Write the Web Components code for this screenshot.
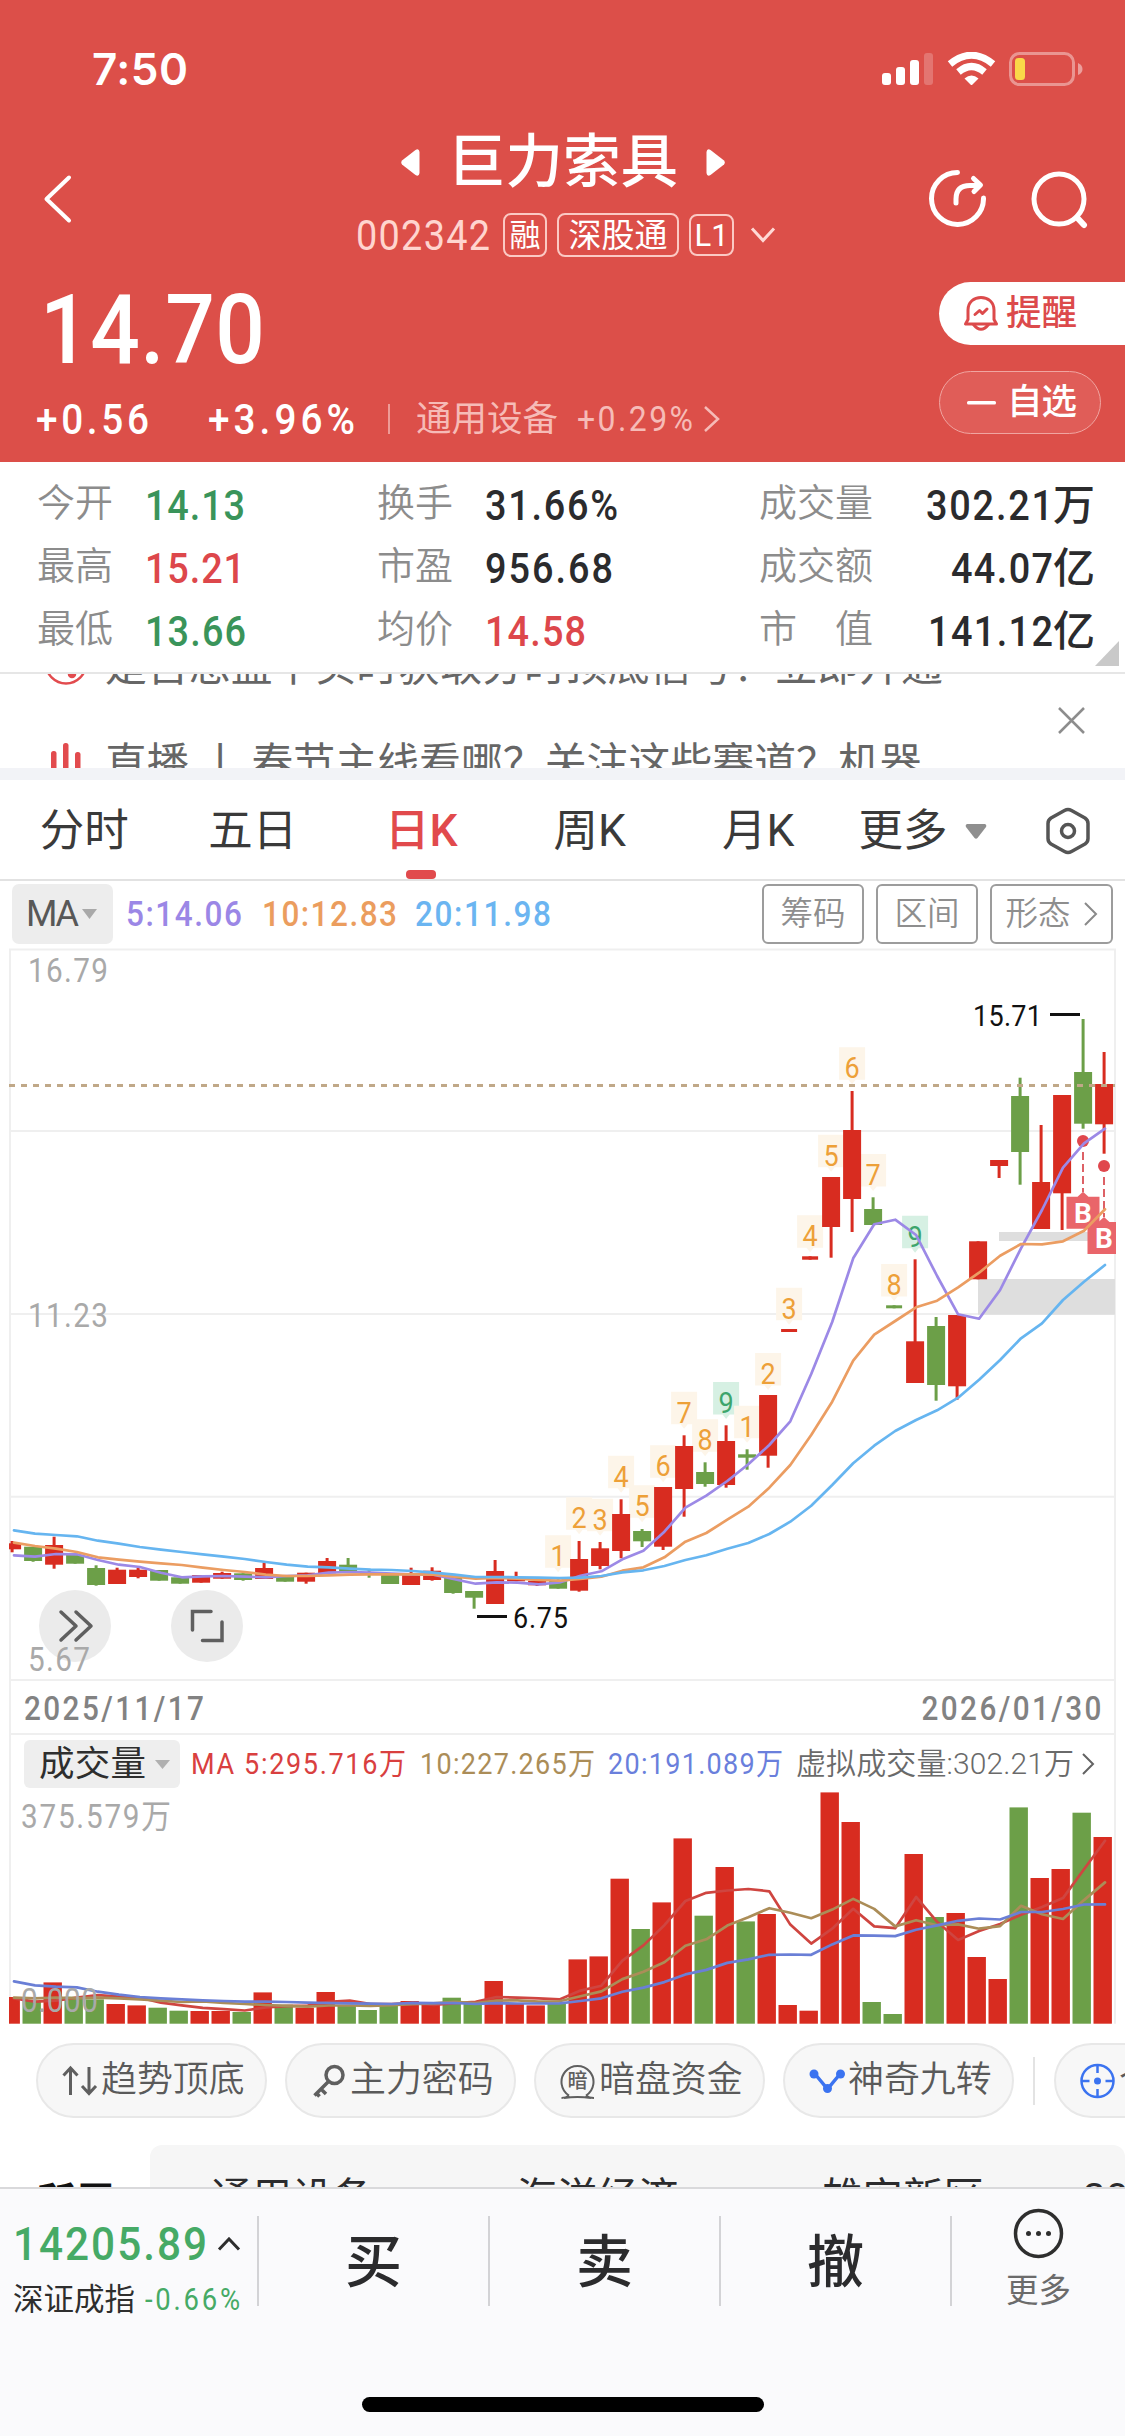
<!DOCTYPE html>
<html lang="zh-CN">
<head>
<meta charset="utf-8">
<title>巨力索具 002342</title>
<style>
    :root {
        --red: #e14a4c;
        --green: #3a945a;
        --ink: #2b2b2d;
        --line: #efefef;
        --header: #dc4f49;
    }

    body {
        margin: 0;
        width: 1125px;
        height: 2436px;
        overflow: hidden;
        display: flex;
        flex-direction: column;
        background: #fff;
        color: var(--ink);
        font-family: Roboto, "Noto Sans CJK SC", sans-serif;
        line-height: 1.2;
    }
</style>
</head>
<body>

    <stock-header>
        <span slot="name">巨力索具</span>
        <span slot="code">002342</span>
        <span slot="price">14.70</span>
    </stock-header>

    <quote-stats></quote-stats>
    <news-ticker></news-ticker>
    <period-tabs></period-tabs>
    <ma-legend></ma-legend>
    <kline-chart></kline-chart>
    <volume-chart></volume-chart>
    <tool-strip></tool-strip>
    <sector-strip></sector-strip>
    <trade-bar></trade-bar>

<script>
// shared base: clones a template into an open shadow root
const make = (html) => {
    const template = document.createElement('template');
    template.innerHTML = html;
    return class extends HTMLElement {
        constructor() {
            super();
            this.attachShadow({ mode: 'open' });
            this.shadowRoot.appendChild(template.content.cloneNode(true));
        }
    };
};

// ==============================================
// header: status bar, name, price
const StatusBar = make(`
    <style>
        :host {
            display: flex;
            justify-content: space-between;
            align-items: flex-start;
            box-sizing: border-box;
            height: 126px;
            padding: 52px 42px 0 92px;
        }
        .time {
            font: 600 44px/34px Inter, sans-serif;
        }
    </style>
    <span class="time"><fit-text w="96">7:50</fit-text></span>
    <svg width="201" height="35" viewBox="0 0 201 35" fill="#fff">
        <rect x="0" y="21" width="9" height="12" rx="3"/>
        <rect x="14" y="15" width="9" height="18" rx="3"/>
        <rect x="28" y="8" width="9" height="25" rx="3"/>
        <rect x="42" y="1" width="9" height="32" rx="3" opacity=".22"/>
        <g fill="none" stroke="#fff" stroke-width="7">
            <path d="M68 12Q89.500 -5.500 111 12"/>
            <path d="M76.500 20Q89.500 9 102.500 20"/>
        </g>
        <path d="M82.500 26.500Q89.500 20.500 96.500 26.500L90.500 32.500Q89.500 33.500 88.500 32.500Z"/>
        <rect x="128.500" y="1.500" width="63" height="31" rx="9" fill="none" stroke="#fff" stroke-width="3" opacity=".4"/>
        <rect x="133" y="6" width="10" height="22" rx="3.500" fill="#fad849"/>
        <path d="M196 11q4.500 2 4.500 6t-4.500 6z" opacity=".45"/>
    </svg>
`);

const StockHeader = make(`
    <style>
        :host {
            display: block;
            height: 462px;
            background: var(--header);
            color: #fff;
        }
        .nav {
            display: grid;
            grid-template-columns: 358px 571px 1fr;
            align-items: center;
            height: 146px;
        }
        .back { margin-left: 42px; }
        .title {
            display: flex;
            align-items: center;
            gap: 28px;
            height: 72px;
            padding-left: 43px;
            font-size: 57.500px;
            line-height: 73px;
            font-weight: 500;
        }
        .title svg { margin-top: 1px; }
        .sub {
            display: flex;
            align-items: center;
            height: 74px;
            font-size: 42px;
            line-height: 60px;
            color: #ffd5cf;
        }
        .tag {
            box-sizing: border-box;
            height: 44px;
            margin-right: 10px;
            border: 2px solid #fbc9c4;
            border-radius: 8px;
            color: #fff;
            font-size: 31px;
            line-height: 42px;
            text-align: center;
            white-space: nowrap;
        }
        .actions {
            display: flex;
            gap: 45px;
        }
        .quote {
            display: grid;
            grid-template-columns: 939px 1fr;
            height: 190px;
        }
        .price {
            height: 115px;
            padding-left: 40px;
            font-size: 97px;
            line-height: 117px;
            font-weight: 500;
        }
        .change {
            display: flex;
            align-items: center;
            height: 63px;
            padding-left: 36px;
            font-size: 43px;
            line-height: 64px;
            font-weight: 500;
        }
        .divider {
            width: 2px;
            height: 30px;
            margin: 0 26px 0 33px;
            background: #ee9b97;
        }
        .sector {
            display: flex;
            align-items: center;
            color: #f6bbb7;
            font-size: 35.500px;
            font-weight: 400;
        }
        .side {
            display: flex;
            flex-direction: column;
            gap: 26px;
            padding-top: 10px;
            font-size: 35.500px;
            line-height: 65px;
            font-weight: 500;
        }
        .remind, .watch {
            display: flex;
            align-items: center;
            box-sizing: border-box;
            height: 63px;
        }
        .remind {
            padding-left: 24px;
            gap: 7px;
            border-radius: 32px 0 0 32px;
            background: #fff;
            color: #dc4a4b;
        }
        .watch {
            width: 162px;
            padding-left: 27px;
            gap: 11px;
            border: 1.500px solid #f0a5a1;
            border-radius: 32px;
            background: #e05d58;
        }
    </style>

    <status-bar></status-bar>

    <div class="nav">
        <svg class="back" width="32" height="50" viewBox="0 0 32 50" fill="none" stroke="#fff" stroke-width="4" stroke-linecap="round" stroke-linejoin="round">
            <path d="M27 3.500 4.500 25 27 46.500"/>
        </svg>
        <div>
            <div class="title">
                <svg width="19" height="27" viewBox="0 0 19 27" fill="#fff"><path d="M1 11.500 14.500 1Q18 -1 18.500 3V24Q18 28 14.500 26L1 15.500Q-.5 13.500 1 11.500Z"/></svg>
                <fit-text w="230"><slot name="name"></slot></fit-text>
                <svg width="19" height="27" viewBox="0 0 19 27" fill="#fff"><path d="M18 11.500 4.500 1Q1 -1 .5 3V24Q1 28 4.500 26L18 15.500Q19.500 13.500 18 11.500Z"/></svg>
            </div>
            <div class="sub">
                <fit-text narrow w="134" style="margin: 1px 13px 0 -2px"><slot name="code"></slot></fit-text>
                <span class="tag" style="width: 44px">融</span>
                <span class="tag" style="width: 122px; font-size: 33px">深股通</span>
                <span class="tag" style="width: 45px; height: 42px; line-height: 40px">L1</span>
                <svg style="margin-left: 6px" width="26" height="18" viewBox="0 0 26 18" fill="none" stroke="#ffd9d5" stroke-width="3"><path d="M2 2.500 13 14.500 24 2.500"/></svg>
            </div>
        </div>
        <div class="actions">
            <svg width="57" height="58" viewBox="0 0 57 58" fill="none" stroke="#fff" stroke-width="5" stroke-linecap="round" stroke-linejoin="round">
                <path d="M28.500 3.500A26 26 0 1 0 54.500 29"/>
                <path d="M27 34V30Q27 16.500 41 16.500H50M44.500 9.500 51.500 16 45 22.500"/>
            </svg>
            <svg width="58" height="60" viewBox="0 0 58 60" fill="none" stroke="#fff" stroke-width="5" stroke-linecap="round">
                <circle cx="28" cy="30" r="25"/><path d="M46 48.500 53 56" stroke-width="6"/>
            </svg>
        </div>
    </div>

    <div class="quote">
        <div>
            <div class="price"><fit-text narrow w="225"><slot name="price"></slot></fit-text></div>
            <div class="change">
                <fit-text narrow w="113">+0.56</fit-text>
                <fit-text narrow w="147" style="margin-left: 59px">+3.96%</fit-text>
                <span class="divider"></span>
                <span class="sector">
                    <fit-text w="142">通用设备</fit-text>
                    <fit-text narrow w="116" style="margin: 0 10px 0 19px">+0.29%</fit-text>
                    <svg width="18" height="28" viewBox="0 0 18 28" fill="none" stroke="#f6bbb7" stroke-width="2.500"><path d="M2 2 15 14 2 26"/></svg>
                </span>
            </div>
        </div>
        <div class="side">
            <div class="remind">
                <svg width="36" height="37" viewBox="0 0 36 37" fill="none" stroke="#dc4a4b" stroke-width="3" stroke-linejoin="round" stroke-linecap="round">
                    <path d="M2.500 29H33.500L31 24.500V15C31 7 25 2.500 18 2.500S5 7 5 15V24.500Z"/>
                    <path d="M10.500 29.500Q18 39 25.500 29.500"/>
                    <path d="M12 19.500 16.500 15.500 19.500 18.500 24 14"/>
                </svg>
                <fit-text w="71">提醒</fit-text>
            </div>
            <div class="watch">
                <svg width="29" height="4" viewBox="0 0 29 4"><rect width="29" height="3.500" rx="1.500" fill="#fff"/></svg>
                <fit-text w="70">自选</fit-text>
            </div>
        </div>
    </div>
`);

// ==============================================
// today's numbers, 3 x 3
const QuoteCell = make(`
    <style>
        :host {
            display: flex;
            align-items: center;
            height: 63px;
            font-size: 42px;
            line-height: 63px;
            font-weight: 500;
            white-space: nowrap;
        }
        .label {
            width: 108px;
            color: #8c8c8c;
            font-size: 38px;
            font-weight: 350;
        }
        :host([wide]) { justify-content: space-between; }
        .value { padding-top: 3px; }
        :host([up]) .value { color: #dd474b; }
        :host([down]) .value { color: var(--green); }
    </style>
    <span class="label"><slot name="label"></slot></span>
    <span class="value"><slot></slot></span>
`);

const QuoteStats = make(`
    <style>
        :host {
            display: grid;
            grid-template-columns: 340px 382px 335px;
            grid-auto-rows: 63px;
            align-content: start;
            box-sizing: border-box;
            height: 212px;
            padding: 10px 0 0 37px;
            border-bottom: 2px solid #e6e6e6;
            position: relative;
        }
        .corner {
            position: absolute;
            right: 6px;
            bottom: 6px;
        }
    </style>
    <quote-cell down><span slot="label">今开</span><fit-text narrow w="100">14.13</fit-text></quote-cell>
    <quote-cell><span slot="label">换手</span><fit-text narrow w="133">31.66%</fit-text></quote-cell>
    <quote-cell wide><span slot="label">成交量</span><fit-text w="168"><fit-text narrow w="127">302.21</fit-text>万</fit-text></quote-cell>
    <quote-cell up><span slot="label">最高</span><fit-text narrow w="100">15.21</fit-text></quote-cell>
    <quote-cell><span slot="label">市盈</span><fit-text narrow w="128">956.68</fit-text></quote-cell>
    <quote-cell wide><span slot="label">成交额</span><fit-text w="143"><fit-text narrow w="102">44.07</fit-text>亿</fit-text></quote-cell>
    <quote-cell down><span slot="label">最低</span><fit-text narrow w="101">13.66</fit-text></quote-cell>
    <quote-cell up><span slot="label">均价</span><fit-text narrow w="101">14.58</fit-text></quote-cell>
    <quote-cell wide><span slot="label">市　值</span><fit-text w="166"><fit-text narrow w="125">141.12</fit-text>亿</fit-text></quote-cell>
    <svg class="corner" width="24" height="25" viewBox="0 0 24 25"><path d="M24 0V25H0Z" fill="#c9c9c9"/></svg>
`);

// ==============================================
// two headlines caught half way through the scroll
const NewsTicker = make(`
    <style>
        :host {
            display: flex;
            box-sizing: border-box;
            height: 106px;
            overflow: hidden;
            border-bottom: 12px solid #f2f3f7;
            color: #666;
            font-size: 41.900px;
            line-height: 60px;
        }
        .lines { width: 1058px; margin-top: -37px; }
        .item {
            display: flex;
            align-items: center;
            height: 60px;
            margin-bottom: 37px;
            padding-left: 44px;
            white-space: nowrap;
        }
        .item svg { margin-right: 17px; flex: none; }
        .close { margin-top: 33px; }
    </style>
    <div class="lines">
        <div class="item">
            <svg width="44" height="44" viewBox="0 0 44 44" fill="none" stroke="#e24b4e" stroke-width="2.500">
                <circle cx="22" cy="18.500" r="20"/>
                <circle cx="28" cy="29" r="3" fill="#e24b4e"/>
            </svg>
            <span>是否想盘中实时获取分时顶底信号？立即开通</span>
        </div>
        <div class="item">
            <svg width="44" height="44" viewBox="0 0 44 44" fill="#e24b4e">
                <rect x="7" y="9" width="5.500" height="30" rx="2.500"/>
                <rect x="19" y="1" width="5.500" height="40" rx="2.500"/>
                <rect x="31" y="10" width="5.500" height="30" rx="2.500"/>
            </svg>
            <span>直播 丨 春节主线看哪？关注这些赛道？机器</span>
        </div>
    </div>
    <svg class="close" width="28" height="28" viewBox="0 0 28 28" stroke="#8d8d8d" stroke-width="2.500"><path d="M1 1 26 26M26 1 1 26"/></svg>
`);

// ==============================================
const PeriodTab = make(`
    <style>
        :host {
            display: flex;
            flex-direction: column;
            align-items: center;
            justify-content: space-between;
            height: 99px;
            color: #3a3a3a;
        }
        .bar { width: 30px; height: 9px; border-radius: 4px; }
        :host([active]) { color: var(--red); font-weight: 500; }
        :host([active]) .bar { background: var(--red); }
    </style>
    <slot></slot>
    <span class="bar"></span>
`);

const PeriodTabs = make(`
    <style>
        :host {
            display: grid;
            grid-template-columns: repeat(5, 168.500px) 1fr 79px;
            box-sizing: border-box;
            height: 101px;
            border-bottom: 2px solid #e2e2e2;
            font-size: 44.500px;
            line-height: 102px;
        }
        period-tab > span { height: 90px; }
        .more {
            display: flex;
            align-items: center;
            gap: 17px;
            padding-left: 16px;
            color: #3a3a3a;
        }
        .gear { align-self: center; }
    </style>
    <period-tab><span>分时</span></period-tab>
    <period-tab><span>五日</span></period-tab>
    <period-tab active><span>日K</span></period-tab>
    <period-tab><span>周K</span></period-tab>
    <period-tab><span>月K</span></period-tab>
    <span class="more">更多 <svg width="22" height="15" viewBox="0 0 22 15"><path d="M2 0H20Q22 1 21 3L12.500 14Q11 15.500 9.500 14L1 3Q0 1 2 0Z" fill="#8f8f8f"/></svg></span>
    <svg class="gear" width="44" height="48" viewBox="0 0 44 48" fill="none" stroke="#555" stroke-width="3.500" stroke-linejoin="round">
        <path d="M18.500 3.500Q22 1.500 25.500 3.500L39 11Q42 13 42 16.500V31.500Q42 35 39 37L25.500 44.500Q22 46.500 18.500 44.500L5 37Q2 35 2 31.500V16.500Q2 13 5 11Z"/>
        <circle cx="22" cy="24" r="6.500"/>
    </svg>
`);

// ==============================================
const MaLegend = make(`
    <style>
        :host {
            display: flex;
            align-items: flex-start;
            box-sizing: border-box;
            height: 67px;
            padding: 3px 12px 0;
            font-size: 35px;
            line-height: 61px;
        }
        .pick {
            display: flex;
            align-items: center;
            gap: 3px;
            box-sizing: border-box;
            width: 101px;
            height: 60px;
            margin-right: 13px;
            padding-left: 14px;
            border-radius: 7px;
            background: #ededed;
            color: #585858;
            font-size: 36px;
        }
        fit-text[narrow] { font-weight: 500; }
        .ma5 { color: #9b87e6; }
        .ma10 { color: #eb9d5e; }
        .ma20 { color: #6bb5f1; }
        .buttons { display: flex; gap: 12px; margin-left: auto; }
        .button {
            display: flex;
            align-items: center;
            justify-content: center;
            gap: 12px;
            box-sizing: border-box;
            width: 102px;
            height: 60px;
            border: 2px solid #9c9c9c;
            border-radius: 6px;
            color: #8e8e8e;
            font-size: 32.500px;
            font-weight: 350;
        }
    </style>
    <span class="pick"><fit-text w="53">MA</fit-text><svg width="15" height="10" viewBox="0 0 15 10"><path d="M0 0H15L7.500 10Z" fill="#a9a9a9"/></svg></span>
    <fit-text narrow class="ma5" w="116">5:14.06</fit-text>
    <fit-text narrow class="ma10" w="135" style="margin-left: 20px">10:12.83</fit-text>
    <fit-text narrow class="ma20" w="136" style="margin-left: 18px">20:11.98</fit-text>
    <span class="buttons">
        <span class="button">筹码</span>
        <span class="button">区间</span>
        <span class="button" style="width: 123px">形态<svg width="15" height="26" viewBox="0 0 15 26" fill="none" stroke="#8a8a8a" stroke-width="2"><path d="M2 2 13 13 2 24"/></svg></span>
    </span>
`);

// ==============================================
// chart data, one row per day: up(1)/down(0), high, body top, body bottom, low (px from the frame top)
const STEP = 21;
const UP = '#d82c20';
const DOWN = '#6c9f48';
const DAYS = [
    [1, 592, 594.3, 600.3, 603.3], [0, 597.7, 597.7, 612, 612.7], [1, 587.7, 596, 615.7, 619.7],
    [0, 606, 606, 614.7, 614.7], [0, 616.3, 619, 636, 636.7], [1, 618.7, 620.7, 635, 635],
    [1, 618.7, 620.7, 628, 629.3], [0, 621, 621, 631.7, 631.7], [0, 627, 628.3, 634.7, 634.7],
    [1, 626, 626, 633.7, 633.7], [1, 622.7, 624, 629.7, 629.7], [0, 624.3, 624.3, 631, 631.7],
    [1, 613.7, 619, 630, 630], [0, 627, 627.7, 632.7, 632.7], [1, 623.7, 623.7, 632.7, 634.7],
    [1, 609, 612, 624.3, 624.3], [0, 609, 615.7, 622.7, 622.7], [0, 621, 623.7, 625, 628.7],
    [0, 626, 626, 635, 635], [1, 618.7, 624.3, 636, 636], [1, 618.3, 621.7, 631, 631.7],
    [0, 628.3, 628.3, 644, 644.7], [0, 642, 642, 648.7, 659.7], [1, 611, 622, 655, 655],
    [1, 622.7, 629, 632.3, 632.3], [1, 631.7, 631.7, 636.3, 637], [0, 630.3, 631.7, 639.7, 639.7],
    [1, 592, 610, 641.7, 642.7], [1, 593, 599.3, 617, 620.3], [1, 550.3, 565, 602, 609.3],
    [0, 580, 582, 592.3, 598], [1, 538, 538, 597.7, 601], [1, 486.3, 497, 540, 567.7],
    [0, 513.3, 523, 535, 537.7], [1, 476.3, 492, 536, 538.7], [0, 500.3, 505.3, 508.7, 520.7],
    [1, 446, 446, 506.7, 518.7], [1, 380, 380, 383, 383], [1, 307.3, 307.3, 310.7, 310.7],
    [1, 228, 228, 278, 308.7], [1, 142, 181, 250, 283], [0, 248.3, 260, 276, 276],
    [0, 356.3, 356.3, 359.3, 359.3], [1, 310.3, 392.3, 434, 434], [0, 368, 377, 436, 451.7],
    [1, 366, 366, 437.3, 450.7], [1, 292.3, 292.3, 330.3, 330.3], [1, 211, 211, 217, 229],
    [0, 128.7, 147, 203, 235.7], [1, 176, 233, 280, 280], [1, 146, 146, 244.3, 281],
    [0, 70, 123, 174.7, 179.7], [1, 103, 135, 175.3, 204.7],
];

const MA5 = [606.3, 607.7, 605, 605.3, 611, 615.7, 618, 623.7, 628.3, 627.3, 627, 627.7, 628.3, 627, 626.3, 623.7, 623, 623.7, 624.7, 625.3, 625.7, 630.3, 634.7, 633.3, 633.7, 635.3, 633.5, 626.7, 622.3, 610.3, 601.7, 582.7, 558.7, 546.7, 532, 515.3, 496, 472.3, 425, 373, 309.3, 275.3, 270.7, 286, 327, 365.3, 369.7, 341, 299.3, 261, 218.7, 194.3, 179.7];
const MA10 = [593.7, 597, 599.7, 603, 608.3, 610.7, 612.7, 614.3, 616, 618.7, 621, 623, 625.7, 627, 627, 626.3, 625.7, 625.3, 625.3, 625.3, 625.7, 627.7, 629.7, 629, 629.7, 631, 631.7, 630, 627.7, 621.7, 618.3, 608.3, 592.7, 584, 570.7, 557.7, 538.7, 516, 486, 452.7, 411.7, 385.7, 372, 358.3, 351.7, 338.3, 323.7, 306.7, 295, 295.3, 292.3, 281.7, 260.3];
const MA20 = [581.3, 584.7, 586, 587.3, 591.7, 594.7, 598, 600.7, 603, 605.3, 607.7, 610, 613, 615.7, 617.7, 618.3, 619.7, 620.7, 621, 622, 623.7, 625.7, 628, 628, 628.3, 628.7, 629, 628.7, 627, 623.3, 621.3, 617, 611, 606.3, 599.7, 594, 585, 572.7, 556.7, 536, 514.3, 496.7, 482, 471, 461.3, 448.7, 430.7, 411, 389.3, 374.3, 351, 332.7, 316];

// nine-turn counters: day, digit, top
const TURNS = [
    [26, 1, 586.3], [27, 2, 548.3], [28, 3, 549.7], [29, 4, 506.7], [30, 5, 536.3], [31, 6, 496.3],
    [32, 7, 442.7], [33, 8, 470.3], [34, 9, 433], [35, 1, 456.7], [36, 2, 404], [37, 3, 338.7],
    [38, 4, 266.3], [39, 5, 185.7], [40, 6, 98.3], [41, 7, 205], [42, 8, 315], [43, 9, 266.7],
];

const VOLUME = [26.7, 23, 41.3, 27, 24.3, 19.7, 18.3, 16, 13, 12.7, 12.7, 11.7, 31.3, 19, 16, 31.7, 17.7, 13.7, 18.3, 22.7, 21.7, 26, 20.3, 42.7, 19.7, 18.3, 20.3, 64.3, 67.3, 145, 94.7, 121.3, 185.3, 108, 156.7, 102.3, 109.7, 18.7, 13, 231.3, 201.7, 21.7, 9.7, 169.7, 106.7, 110.7, 66.7, 44.7, 216.3, 145.7, 154.7, 211, 186.7];

const line = (ys, color) =>
    `<polyline points="${ys.map((y, i) => `${(14 + i * 20.98).toFixed(1)},${y.toFixed(1)}`).join(' ')}" fill="none" stroke="${color}" stroke-width="2.700" stroke-linejoin="round" stroke-linecap="round"/>`;

const candle = ([up, high, top, bottom, low], i) => {
    const x = 12.1 + i * STEP;
    const color = up ? UP : DOWN;
    const flat = low - high < 4;
    const half = flat ? 8 : 9;
    const left = Math.max(x - half, 9);
    return `<path d="M${x - 1.5} ${high}h3V${low}h-3Z" fill="${color}"/>
        <rect x="${left}" y="${top}" width="${x + half - left}" height="${bottom - top}" fill="${color}"/>`;
};

const turn = ([day, digit, top]) => {
    const x = 12.1 + day * STEP;
    const nine = digit === 9;
    return `<path d="M${x - 13} ${top}h26v32.500h-9.500l-3.500 4.500l-3.500-4.500h-9.500Z" fill="${nine ? '#d6f0e3' : '#fdf5e9'}"/>
        <text transform="translate(${x} ${top + 31}) scale(.9 1)" text-anchor="middle" font-size="30" fill="${nine ? '#3da56c' : '#eda038'}">${digit}</text>`;
};

const badge = (x, y) => `
    <path d="M${x - 16.5} ${y}h11l5.500-5l5.500 5h11v32h-33Z" fill="#e9656a"/>
    <text x="${x}" y="${y + 26}" text-anchor="middle" font-size="28" font-weight="700" fill="#fff">B</text>`;

// svg label with the same slim digits as <fit-text narrow>
const label = (cls, x, y, w, text) =>
    `<text class="${cls}" transform="translate(${x} ${y}) scale(.9 1)" textLength="${w / 0.9}">${text}</text>`;

const KlineChart = make(`
    <style>
        :host { display: block; height: 787px; }
        svg { display: block; }
        .axis { fill: #a9a9a9; font-size: 33px; }
        .date { fill: #828282; font-size: 33px; font-weight: 500; }
        .peak { fill: #111; font-size: 30px; }
    </style>
    <svg width="1125" height="787" viewBox="0 -1 1125 787">
        <defs><clipPath id="frame"><rect x="9" y="0" width="1107" height="731"/></clipPath></defs>
        <g fill="none" stroke="#efefef" stroke-width="2">
            <path d="M10 786V.5H1115V786M10 182H1115M10 365H1115M10 547.700H1115M10 731H1115M10 785H1115"/>
        </g>
        <g fill="#dedede">
            <rect x="999" y="283" width="96" height="9"/>
            <rect x="978" y="330" width="137" height="35.700"/>
        </g>
        <g clip-path="url(#frame)">
            ${TURNS.map(turn).join('')}
            ${DAYS.map(candle).join('')}
            <g stroke="#dd6166" stroke-width="2" stroke-dasharray="8 4">
                <path d="M1083 203V243M1104 228V268"/>
            </g>
            <g fill="#e0474d"><circle cx="1083" cy="192" r="6"/><circle cx="1104" cy="217" r="6"/></g>
            ${badge(1083, 247.7)}
            ${badge(1104, 273)}
            ${line(MA5, '#9c89e6')}
            ${line(MA10, '#eb9d62')}
            ${line(MA20, '#66b5f0')}
            <path d="M9 136.500H1115" stroke="#c0a888" stroke-width="3" stroke-dasharray="6 6"/>
        </g>

        ${label('peak', 973, 77, 69, '15.71')}
        ${label('peak', 513, 679, 55, '6.75')}
        <g fill="#111">
            <rect x="1050" y="64" width="30" height="3"/>
            <rect x="477" y="666" width="30" height="3"/>
        </g>

        <g fill="#ebebeb"><circle cx="75" cy="677" r="36"/><circle cx="207" cy="677" r="36"/></g>
        <g fill="none" stroke="#5f5f5f" stroke-width="3.500" stroke-linecap="round" stroke-linejoin="round">
            <path d="M61 663 76 677 61 691M76 663 91 677 76 691"/>
            <path d="M192.500 681V662.500H211M202.500 691.500H222V673" stroke-linejoin="miter"/>
        </g>

        ${label('axis', 28, 33, 80, '16.79')}
        ${label('axis', 28, 378, 80, '11.23')}
        ${label('axis', 28, 722, 62, '5.67')}
        ${label('date', 24, 771, 180, '2025/11/17')}
        ${label('date', 921.5, 771, 180, '2026/01/30')}
    </svg>
`);

// ==============================================
const BASE = 288.7;

// the first days have no history in VOLUME, so their averages are given as seed
const average = (n, seed) => VOLUME.map((v, i) => {
    if (i < seed.length) return BASE - seed[i];
    const window = VOLUME.slice(i - n + 1, i + 1);
    return BASE - window.reduce((a, b) => a + b, 0) / n;
});

const bar = (h, i) => {
    const left = Math.max(10.7 + i * STEP - 9.2, 9);
    const right = 10.7 + i * STEP + 9.2;
    return `<rect x="${left}" y="${BASE - h}" width="${right - left}" height="${h}" fill="${DAYS[i][0] ? UP : DOWN}"/>`;
};

const VolumeChart = make(`
    <style>
        :host {
            display: grid;
            height: 308px;
        }
        svg, .legend { grid-area: 1 / 1; }
        svg { display: block; }
        .legend {
            display: flex;
            align-items: center;
            align-self: start;
            height: 48px;
            padding: 5px 0 0 24px;
            font-size: 30px;
            line-height: 50px;
            white-space: nowrap;
        }
        .pick {
            display: flex;
            align-items: center;
            gap: 9px;
            box-sizing: border-box;
            width: 156px;
            height: 48px;
            margin-right: 11px;
            padding-left: 15px;
            border-radius: 6px;
            background: #eee;
            color: #2e2e2e;
            font-size: 35.500px;
            line-height: 44px;
        }
        .axis { fill: #a9a9a9; font-size: 33px; }
    </style>
    <svg width="1125" height="308" viewBox="0 0 1125 308">
        <path d="M10 0V${BASE}M1115 0V${BASE}" stroke="#efefef" stroke-width="2"/>
        ${VOLUME.map(bar).join('')}
        ${line(average(5, [25.3, 22, 23, 26]), '#cf4540')}
        ${line(average(10, [26, 25.3, 26, 25.3, 26, 25.3, 24.3, 23, 21.7]), '#ab8d58')}
        ${line(average(20, [42.3, 38.3, 37, 36.3, 32, 29, 26.7, 25.3, 24.3, 23.3, 22.7, 22, 22, 21.7, 21, 20.7, 20.3, 20, 19.7]), '#6a7fd6')}
        ${label('axis', 21, 93, 150, '375.579万')}
        ${label('axis', 21, 277, 77, '0.000')}
    </svg>
    <div class="legend">
        <span class="pick"><fit-text w="107">成交量</fit-text><svg width="15" height="9" viewBox="0 0 15 9"><path d="M0 0H15L7.500 9Z" fill="#b0b0b0"/></svg></span>
        <fit-text narrow w="215" style="color: #d9403f">MA 5:295.716万</fit-text>
        <fit-text narrow w="175" style="color: #ab8d58; margin-left: 14px">10:227.265万</fit-text>
        <fit-text narrow w="175" style="color: #6a7fdc; margin-left: 13px">20:191.089万</fit-text>
        <fit-text w="278" style="color: #6a6a6a; margin: 0 7px 0 13px; font-weight: 350">虚拟成交量:302.21万</fit-text>
        <svg width="14" height="22" viewBox="0 0 14 22" fill="none" stroke="#636363" stroke-width="2"><path d="M2 1 12 11 2 21"/></svg>
    </div>
`);

// ==============================================
const ToolPill = make(`
    <style>
        :host {
            display: flex;
            align-items: center;
            flex: none;
            box-sizing: border-box;
            width: 231px;
            height: 75px;
            padding-left: 24px;
            border: 2px solid #e8e8e8;
            border-radius: 38px;
            background: #f7f7f7;
            color: #5a5a5a;
            font-size: 35.900px;
            line-height: 73px;
            font-weight: 350;
            white-space: nowrap;
        }
        .icon {
            display: flex;
            width: 39px;
            flex: none;
        }
    </style>
    <span class="icon"><slot name="icon"></slot></span>
    <slot></slot>
`);

const ToolStrip = make(`
    <style>
        :host {
            display: flex;
            align-items: center;
            gap: 18px;
            height: 75px;
            padding-left: 36px;
            overflow: hidden;
        }
        .divider {
            flex: none;
            width: 2px;
            height: 48px;
            margin: 0 1px;
            background: #e3e3e3;
        }
    </style>
    <tool-pill>
        <svg slot="icon" width="36" height="36" viewBox="0 0 36 36" fill="none" stroke="#5f5f5f" stroke-width="3">
            <path d="M8.500 32V5M1.500 12.500 8.500 5 15.500 12.500M27 4V30M20 23 27 30.500 34 23"/>
        </svg>趋势顶底
    </tool-pill>
    <tool-pill>
        <svg slot="icon" width="36" height="36" viewBox="0 0 36 36" fill="none" stroke="#5f5f5f" stroke-width="3.500">
            <circle cx="23.500" cy="12" r="8.500"/>
            <path d="M17.500 18.500 3.500 32.500M10 26 15 31M5.500 30 8.500 33.500"/>
        </svg>主力密码
    </tool-pill>
    <tool-pill>
        <svg slot="icon" width="36" height="38" viewBox="0 0 36 38" fill="none" stroke="#5f5f5f" stroke-width="2">
            <path d="M9 33.500A16 16 0 1 1 26 33.500M1.500 36Q6 36 9 33.500M34 36Q29 36 26 33.500M4 36Q17.500 34 31 36"/>
            <text x="17.500" y="26" text-anchor="middle" font-size="20" font-weight="500" fill="#5f5f5f" stroke="none">暗</text>
        </svg>暗盘资金
    </tool-pill>
    <tool-pill>
        <svg slot="icon" width="37" height="36" viewBox="0 0 37 36" fill="#3b73f0">
            <path d="M6 11 18.500 26 31 11" fill="none" stroke="#3b73f0" stroke-width="3.500"/>
            <circle cx="5" cy="11" r="4.500"/><circle cx="18.500" cy="25.500" r="4.500"/><circle cx="31.500" cy="11" r="4.500"/>
        </svg>神奇九转
    </tool-pill>
    <span class="divider"></span>
    <tool-pill>
        <svg slot="icon" width="36" height="36" viewBox="0 0 36 36" fill="none" stroke="#3b73f0" stroke-width="2.500">
            <circle cx="17.500" cy="18" r="16"/>
            <path d="M17.500 2V10M17.500 26V34M1.500 18H9.500M25.500 18H33.500"/>
            <circle cx="17.500" cy="18" r="3.500" fill="#3b73f0" stroke="none"/>
        </svg>个股
    </tool-pill>
`);

// ==============================================
// sectors, mostly hidden under the trade bar
const SectorStrip = make(`
    <style>
        :host {
            display: grid;
            grid-template-columns: 150px 975px;
            box-sizing: border-box;
            height: 69px;
            padding-top: 27px;
            overflow: hidden;
            font-size: 40.500px;
            line-height: 60px;
            white-space: nowrap;
        }
        .label {
            padding: 28px 0 0 36px;
            color: #111;
            font-weight: 700;
            font-size: 39.500px;
        }
        .card {
            display: grid;
            grid-template-columns: 305.500px 305.500px 261px 1fr;
            padding: 22.500px 0 0 61px;
            border-radius: 12px 12px 0 0;
            background: #f6f6f6;
        }
    </style>
    <div class="label">所属</div>
    <div class="card"><span>通用设备</span><span>海洋经济</span><span>雄安新区</span><span>30</span></div>
`);

// ==============================================
const TradeBar = make(`
    <style>
        :host {
            display: block;
            box-sizing: border-box;
            height: 249px;
            border-top: 2px solid #d9d9db;
            background: #fafafc;
        }
        .row {
            display: grid;
            grid-template-columns: 257px 231px 231px 231px 1fr;
            height: 208px;
        }
        .index { padding: 24px 0 0 13px; color: #46aa66; }
        .index div { display: flex; align-items: center; }
        .last { font-size: 47px; line-height: 62px; font-weight: 500; }
        .name { font-size: 30.500px; line-height: 46px; margin-top: 2px; }
        .name span { color: #2e2e2e; width: 132px; white-space: nowrap; }
        .act {
            height: 90px;
            margin-top: 27px;
            border-left: 2px solid #d3d3d6;
            font-size: 57px;
            line-height: 93px;
            font-weight: 500;
            text-align: center;
        }
        .more {
            display: flex;
            flex-direction: column;
            align-items: center;
            height: 90px;
            margin-top: 27px;
            border-left: 2px solid #d3d3d6;
            color: #6b6b6b;
            font-size: 32.500px;
            line-height: 50px;
        }
        .more svg { flex: none; margin: -8px 0 7px; }
        .home {
            width: 402px;
            height: 15px;
            margin: 0 auto;
            border-radius: 8px;
            background: #000;
        }
    </style>
    <div class="row">
        <div class="index">
            <div class="last"><fit-text narrow w="194">14205.89</fit-text>
                <svg style="margin-left: 10px" width="24" height="14" viewBox="0 0 24 14" fill="none" stroke="#2e2e2e" stroke-width="3"><path d="M2 12.500 12 2 22 12.500"/></svg>
            </div>
            <div class="name"><span>深证成指</span><fit-text narrow w="95">-0.66%</fit-text></div>
        </div>
        <div class="act">买</div>
        <div class="act">卖</div>
        <div class="act">撤</div>
        <div class="more">
            <svg width="51" height="51" viewBox="0 0 51 51" fill="#2e2e2e">
                <circle cx="25.500" cy="25.500" r="23" fill="none" stroke="#2e2e2e" stroke-width="3.500"/>
                <circle cx="15.500" cy="25.500" r="2.500"/><circle cx="25.500" cy="25.500" r="2.500"/><circle cx="35.500" cy="25.500" r="2.500"/>
            </svg>
            <span>更多</span>
        </div>
    </div>
    <div class="home"></div>
`);

// ==============================================
// <fit-text w="120">: spreads or tightens the letters so that the text is w px wide
// narrow: slims the glyphs first, for digits
class FitText extends make(`
    <style>
        :host { display: inline-block; white-space: nowrap; }
        span { display: inline-block; transform-origin: 0 50%; }
    </style>
    <span><slot></slot></span>
`) {
    connectedCallback() {
        const w = Number(this.getAttribute('w'));
        this.style.width = `${w}px`;
        // a wrapper round another fit-text only sets the width
        if (this.querySelector('fit-text')) return;

        const span = this.shadowRoot.querySelector('span');
        const slot = this.querySelector('slot');
        const text = slot ? slot.assignedNodes().map((n) => n.textContent).join('') : this.textContent;
        const scale = this.hasAttribute('narrow') ? 0.9 : 1;
        const natural = span.getBoundingClientRect().width;
        const gap = (w / scale - natural) / (text.trim().length - 1);
        span.style.letterSpacing = `${gap}px`;
        if (scale !== 1) span.style.transform = `scaleX(${scale})`;
    }
}

window.customElements.define('status-bar', StatusBar);
window.customElements.define('quote-cell', QuoteCell);
window.customElements.define('period-tab', PeriodTab);
window.customElements.define('tool-pill', ToolPill);
window.customElements.define('stock-header', StockHeader);
window.customElements.define('quote-stats', QuoteStats);
window.customElements.define('news-ticker', NewsTicker);
window.customElements.define('period-tabs', PeriodTabs);
window.customElements.define('ma-legend', MaLegend);
window.customElements.define('kline-chart', KlineChart);
window.customElements.define('volume-chart', VolumeChart);
window.customElements.define('tool-strip', ToolStrip);
window.customElements.define('sector-strip', SectorStrip);
window.customElements.define('trade-bar', TradeBar);
// last, so that it measures text which already has its final font
window.customElements.define('fit-text', FitText);
</script>
</body>
</html>
